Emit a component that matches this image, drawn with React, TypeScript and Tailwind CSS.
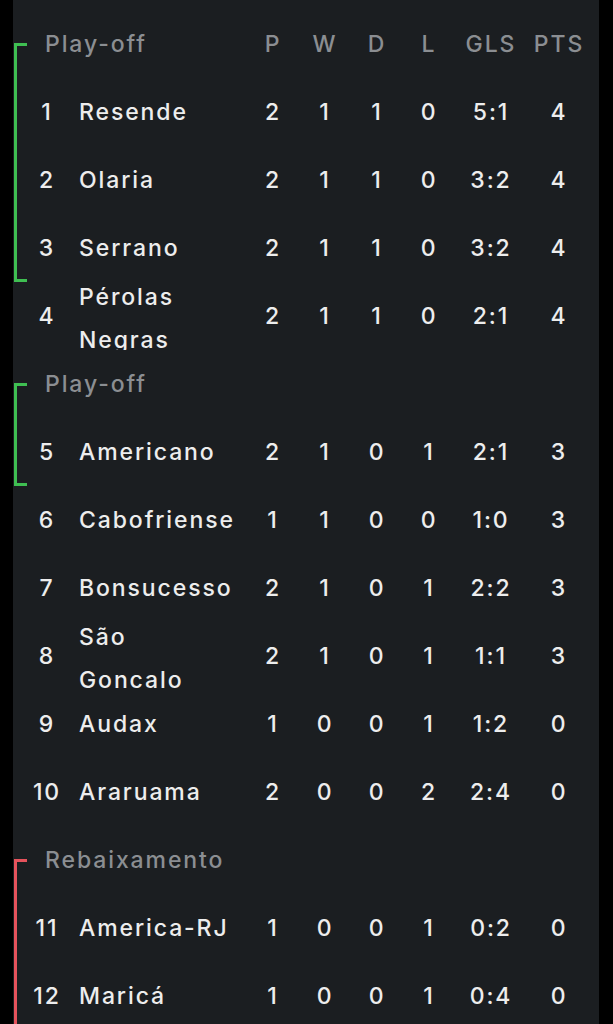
import React from "react";

type Row = {
  pos: number;
  name: React.ReactNode;
  multi?: boolean;
  p: number;
  w: number;
  d: number;
  l: number;
  gls: string;
  pts: number;
};

const font = { fontFamily: "Inter, 'Noto Sans', sans-serif" };

function StatCells({ cells, gray }: { cells: (string | number)[]; gray?: boolean }) {
  const widths = ["w-[52px]", "w-[52px]", "w-[52px]", "w-[52px]", "w-[72px]", "w-[64px]"];
  return (
    <>
      {cells.map((c, i) => (
        <div
          key={i}
          className={`${widths[i]} shrink-0 text-center ${gray ? "text-[#8b8e92]" : "text-[#ededed]"}`}
        >
          {c}
        </div>
      ))}
    </>
  );
}

function TeamRow({ r }: { r: Row }) {
  return (
    <div className="flex h-[68px] items-center pl-[14px] overflow-hidden">
      <div className="w-[40px] shrink-0 text-center text-[#ededed]">{r.pos}</div>
      <div className="ml-[12px] w-[168px] shrink-0 h-[68px] overflow-hidden flex items-center text-[#ededed]">
        {r.multi ? (
          <div className="leading-[43px] pt-[6px]">{r.name}</div>
        ) : (
          <div>{r.name}</div>
        )}
      </div>
      <StatCells cells={[r.p, r.w, r.d, r.l, r.gls, r.pts]} />
    </div>
  );
}

function SectionHeader({ label, withCols }: { label: string; withCols?: boolean }) {
  return (
    <div className="flex h-[68px] items-center">
      <div className="w-[234px] shrink-0 pl-[32px] text-[#8b8e92]">{label}</div>
      {withCols && <StatCells gray cells={["P", "W", "D", "L", "GLS", "PTS"]} />}
    </div>
  );
}

function Group({ color, children }: { color: "green" | "red"; children: React.ReactNode }) {
  return (
    <div className="relative">
      <div
        className={`absolute left-[1px] top-[33px] bottom-0 w-[13px] border-l-[3px] border-t-[3px] border-b-[3px] ${
          color === "green" ? "border-[#3fbf52]" : "border-[#e6535c]"
        }`}
      />
      {children}
    </div>
  );
}

const rows: Row[] = [
  { pos: 1, name: "Resende", p: 2, w: 1, d: 1, l: 0, gls: "5:1", pts: 4 },
  { pos: 2, name: "Olaria", p: 2, w: 1, d: 1, l: 0, gls: "3:2", pts: 4 },
  { pos: 3, name: "Serrano", p: 2, w: 1, d: 1, l: 0, gls: "3:2", pts: 4 },
  {
    pos: 4,
    name: (
      <>
        Pérolas
        <br />
        Negras
      </>
    ),
    multi: true,
    p: 2,
    w: 1,
    d: 1,
    l: 0,
    gls: "2:1",
    pts: 4,
  },
  { pos: 5, name: "Americano", p: 2, w: 1, d: 0, l: 1, gls: "2:1", pts: 3 },
  { pos: 6, name: "Cabofriense", p: 1, w: 1, d: 0, l: 0, gls: "1:0", pts: 3 },
  { pos: 7, name: "Bonsucesso", p: 2, w: 1, d: 0, l: 1, gls: "2:2", pts: 3 },
  {
    pos: 8,
    name: (
      <>
        São
        <br />
        Goncalo
      </>
    ),
    multi: true,
    p: 2,
    w: 1,
    d: 0,
    l: 1,
    gls: "1:1",
    pts: 3,
  },
  { pos: 9, name: "Audax", p: 1, w: 0, d: 0, l: 1, gls: "1:2", pts: 0 },
  { pos: 10, name: "Araruama", p: 2, w: 0, d: 0, l: 2, gls: "2:4", pts: 0 },
  { pos: 11, name: "America-RJ", p: 1, w: 0, d: 0, l: 1, gls: "0:2", pts: 0 },
  { pos: 12, name: "Maricá", p: 1, w: 0, d: 0, l: 1, gls: "0:4", pts: 0 },
];

export default function App() {
  return (
    <div className="min-h-screen bg-black overflow-hidden" style={font}>
      <div className="ml-[13px] w-[586px] bg-[#1b1e21] pt-[10px] text-[23px] font-medium leading-[42px] tracking-[1.9px]">
        <Group color="green">
          <SectionHeader label="Play-off" withCols />
          {rows.slice(0, 3).map((r) => (
            <TeamRow key={r.pos} r={r} />
          ))}
        </Group>
        <TeamRow r={rows[3]} />
        <Group color="green">
          <SectionHeader label="Play-off" />
          <TeamRow r={rows[4]} />
        </Group>
        {rows.slice(5, 10).map((r) => (
          <TeamRow key={r.pos} r={r} />
        ))}
        <Group color="red">
          <SectionHeader label="Rebaixamento" />
          {rows.slice(10).map((r) => (
            <TeamRow key={r.pos} r={r} />
          ))}
        </Group>
      </div>
    </div>
  );
}
